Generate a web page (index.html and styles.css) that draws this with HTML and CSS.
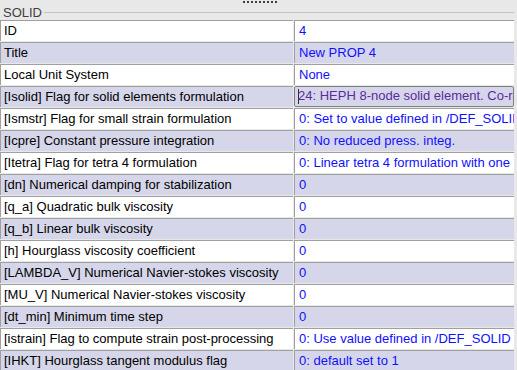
FILE: index.html
```html
<!DOCTYPE html>
<html lang="en">

<head>
    <meta charset="UTF-8">
    <meta name="viewport" content="width=device-width, initial-scale=1.0">
    <title>SOLID</title>
    <link rel="stylesheet" href="styles.css">
</head>

<body>
    <div class="panel">
        <div class="grip"></div>
        <div class="group-title"><span>SOLID</span></div>
        <div class="grid">
            <div class="row">
                <div class="cell name">ID</div>
                <div class="cell value">4</div>
            </div>
            <div class="row alt">
                <div class="cell name">Title</div>
                <div class="cell value">New PROP 4</div>
            </div>
            <div class="row">
                <div class="cell name">Local Unit System</div>
                <div class="cell value">None</div>
            </div>
            <div class="row alt">
                <div class="cell name">[Isolid] Flag for solid elements formulation</div>
                <div class="cell value editing"><span class="caret"></span>24: HEPH 8-node solid element. Co-rotational formulation</div>
            </div>
            <div class="row">
                <div class="cell name">[Ismstr] Flag for small strain formulation</div>
                <div class="cell value">0: Set to value defined in /DEF_SOLID</div>
            </div>
            <div class="row alt">
                <div class="cell name">[Icpre] Constant pressure integration</div>
                <div class="cell value">0: No reduced press. integ.</div>
            </div>
            <div class="row">
                <div class="cell name">[Itetra] Flag for tetra 4 formulation</div>
                <div class="cell value">0: Linear tetra 4 formulation with one integration point</div>
            </div>
            <div class="row alt">
                <div class="cell name">[dn] Numerical damping for stabilization</div>
                <div class="cell value">0</div>
            </div>
            <div class="row">
                <div class="cell name">[q_a] Quadratic bulk viscosity</div>
                <div class="cell value">0</div>
            </div>
            <div class="row alt">
                <div class="cell name">[q_b] Linear bulk viscosity</div>
                <div class="cell value">0</div>
            </div>
            <div class="row">
                <div class="cell name">[h] Hourglass viscosity coefficient</div>
                <div class="cell value">0</div>
            </div>
            <div class="row alt">
                <div class="cell name">[LAMBDA_V] Numerical Navier-stokes viscosity</div>
                <div class="cell value">0</div>
            </div>
            <div class="row">
                <div class="cell name">[MU_V] Numerical Navier-stokes viscosity</div>
                <div class="cell value">0</div>
            </div>
            <div class="row alt">
                <div class="cell name">[dt_min] Minimum time step</div>
                <div class="cell value">0</div>
            </div>
            <div class="row">
                <div class="cell name">[istrain] Flag to compute strain post-processing</div>
                <div class="cell value">0: Use value defined in /DEF_SOLID</div>
            </div>
            <div class="row alt">
                <div class="cell name">[IHKT] Hourglass tangent modulus flag</div>
                <div class="cell value">0: default set to 1</div>
            </div>
        </div>
    </div>
</body>

</html>
```

FILE: styles.css
```css
* {
    box-sizing: border-box;
}

body {
    margin: 0;
    background: #e8e8e8;
    font-family: "Liberation Sans", Arial, sans-serif;
    font-size: 12px;
    overflow: hidden;
}

.panel {
    position: relative;
    padding: 5px 3px 0 0;
}

.grip {
    position: absolute;
    top: 1px;
    left: 243px;
    width: 34px;
    height: 2px;
    background: repeating-linear-gradient(90deg, #404040 0 2px, transparent 2px 4px);
}

.group-title {
    display: flex;
    align-items: center;
    height: 14px;
    padding-left: 3px;
    color: #404040;
    font-size: 13px;
}

.group-title::after {
    content: "";
    flex: 1;
    height: 1px;
    margin-left: 2px;
    background: #c4c4c4;
}

.grid {
    margin-top: 0;
}

.row {
    display: grid;
    grid-template-columns: 293px 1fr;
    column-gap: 1px;
    height: 22px;
    padding-top: 1px;
}

.cell {
    background: #fff;
    border-top: 1px solid #a0a0a0;
    border-left: 1px solid #a0a0a0;
    padding: 0 0 0 3px;
    line-height: 20px;
    font-size: 13px;
    white-space: nowrap;
    overflow: hidden;
}

.row.alt .cell {
    background: #d6d6ea;
}

.name {
    color: #000;
}

.value {
    color: #1010ff;
    padding-left: 4px;
}

.row .value.editing {
    position: relative;
    color: #5a2aa0;
    border: 1px solid #808080;
    border-radius: 2px;
    padding-left: 3px;
    line-height: 18px;
}

.caret {
    position: absolute;
    left: 3px;
    top: 2px;
    width: 1px;
    height: 15px;
    background: #303030;
}
```
